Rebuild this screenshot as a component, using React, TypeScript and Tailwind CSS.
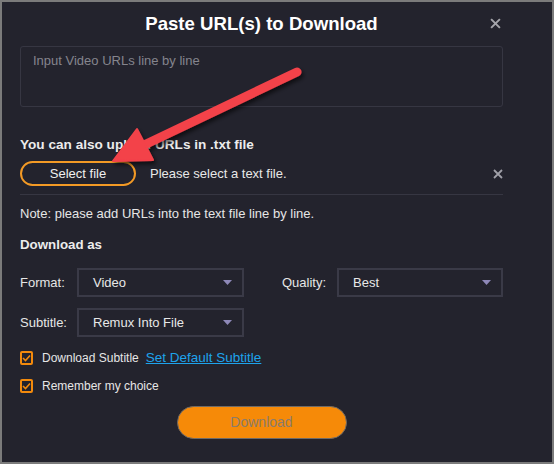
import React from "react";

const font = { fontFamily: '"Liberation Sans", Arial, sans-serif' };

function Caret() {
  return (
    <svg width="9" height="5" viewBox="0 0 9 5" className="shrink-0">
      <path d="M0 0h9L4.5 5z" fill="#8e88b8" />
    </svg>
  );
}

function XIcon({ size, color }: { size: number; color: string }) {
  return (
    <svg width={size} height={size} viewBox="0 0 10 10">
      <path d="M1 1l8 8M9 1l-8 8" stroke={color} strokeWidth="1.8" />
    </svg>
  );
}

function Select({ value, className }: { value: string; className: string }) {
  return (
    <div
      className={`flex h-[29px] items-center justify-between border-2 border-[#3a3a47] pl-[14px] pr-[10px] text-[13px] text-[#e8e8e8] ${className}`}
    >
      <span>{value}</span>
      <Caret />
    </div>
  );
}

function Check({ label, children }: { label: string; children?: React.ReactNode }) {
  return (
    <div className="flex h-[14px] items-center">
      <div className="flex h-[14px] w-[13px] items-center justify-center rounded-[2px] border-2 border-[#f38a0c]">
        <svg width="9" height="8" viewBox="0 0 9 8">
          <path d="M1 4l2.5 2.5L8 1.5" fill="none" stroke="#f38a0c" strokeWidth="1.6" />
        </svg>
      </div>
      <span className="ml-[9px] text-[12px] text-[#e6e6e6]">{label}</span>
      {children}
    </div>
  );
}

export default function App() {
  return (
    <div
      style={font}
      className="relative h-[464px] w-[554px] overflow-hidden border-2 border-[#7b7b7b] bg-[#23232d]"
    >
      {/* header */}
      <div className="relative flex h-[44px] items-center justify-center pl-[18px] pr-[49px]">
        <h1 className="text-[18.6px] font-bold text-white">Paste URL(s) to Download</h1>
        <span className="absolute right-[51px] top-[16px]">
          <XIcon size={11} color="#a4a4aa" />
        </span>
      </div>

      <div className="pl-[18px] pr-[49px]">
        <div className="h-[61px] rounded-[3px] border border-[#363642] px-[12px] pt-[4px] text-[13px] text-[#85858d]">
          Input Video URLs line by line
        </div>

        <div className="mt-[30px] text-[13.6px] font-bold leading-[16px] text-[#ececec]">
          You can also upload URLs in .txt file
        </div>

        <div className="mt-[8px] flex items-center">
          <button className="h-[25px] w-[116px] rounded-full border-2 border-[#f39a25] text-[13px] text-[#f0f0f0]">
            Select file
          </button>
          <span className="ml-[14px] text-[13px] text-[#e8e8e8]">Please select a text file.</span>
          <span className="ml-auto">
            <XIcon size={10} color="#a0a0a8" />
          </span>
        </div>

        <div className="mt-[8px] h-px bg-[#363642]" />

        <div className="mt-[11px] text-[13px] leading-[16px] text-[#e6e6e6]">
          Note: please add URLs into the text file line by line.
        </div>

        <div className="mt-[15px] text-[13.3px] font-bold leading-[16px] text-[#ececec]">Download as</div>

        <div className="mt-[15px] flex items-center">
          <span className="w-[57px] text-[13px] text-[#e6e6e6]">Format:</span>
          <Select value="Video" className="w-[167px]" />
          <span className="ml-[38px] w-[55px] text-[13px] text-[#e6e6e6]">Quality:</span>
          <Select value="Best" className="flex-1" />
        </div>

        <div className="mt-[11px] flex items-center">
          <span className="w-[57px] text-[13px] text-[#e6e6e6]">Subtitle:</span>
          <Select value="Remux Into File" className="w-[167px]" />
        </div>

        <div className="mt-[14px]">
          <Check label="Download Subtitle">
            <a className="ml-[7px] text-[13.5px] text-[#1ea3ec] underline">Set Default Subtitle</a>
          </Check>
        </div>
        <div className="mt-[14px]">
          <Check label="Remember my choice" />
        </div>

        <div className="mt-[13px] flex justify-center">
          <button className="h-[33px] w-[170px] rounded-full border border-[#6f6a66] bg-[#f68a08] text-[14px] text-[#8a7c6c]">
            Download
          </button>
        </div>
      </div>

      {/* annotation arrow */}
      <svg className="pointer-events-none absolute left-[-2px] top-[-2px]" width="554" height="464">
        <defs>
          <filter id="sh" x="-20%" y="-20%" width="140%" height="140%">
            <feDropShadow dx="2" dy="3" stdDeviation="2" floodColor="#000" floodOpacity="0.6" />
          </filter>
        </defs>
        <g filter="url(#sh)" fill="#f3424a" stroke="#f3424a">
          <line x1="297" y1="72" x2="142" y2="146" strokeWidth="9" strokeLinecap="round" />
          <path d="M113 161L137 129L153 160Z" strokeWidth="2" strokeLinejoin="round" />
        </g>
      </svg>
    </div>
  );
}
